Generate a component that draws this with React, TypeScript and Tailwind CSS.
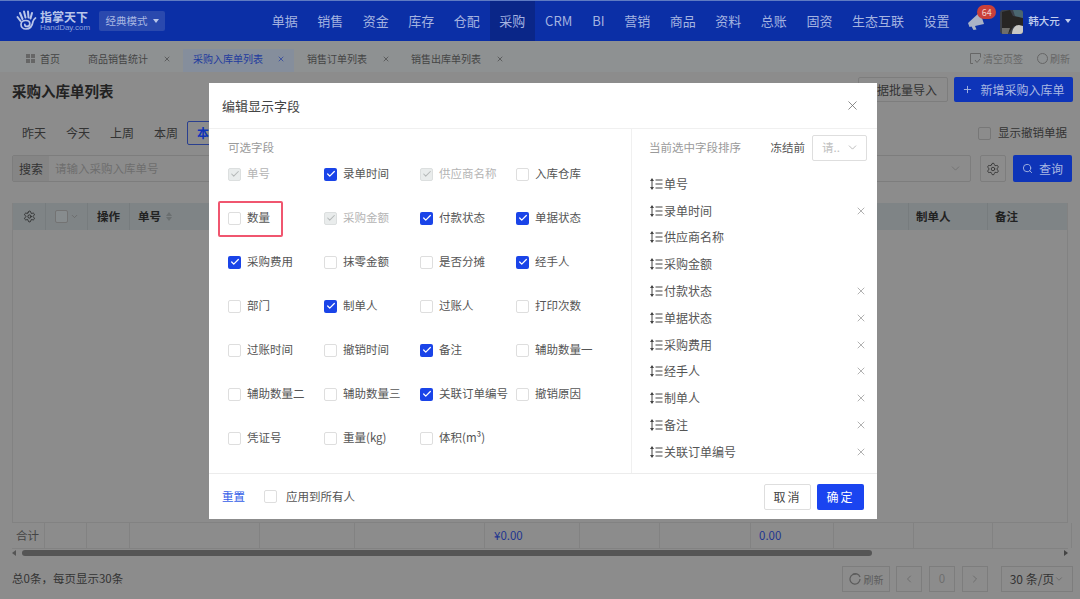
import { Check, ChevronDown, ChevronLeft, ChevronRight, Plus, Search, Settings, X } from "lucide-react"

const FONT = { fontFamily: '"Noto Sans CJK SC", "Noto Sans", sans-serif' }

const NAV = ["单据", "销售", "资金", "库存", "仓配", "采购", "CRM", "BI", "营销", "商品", "资料", "总账", "固资", "生态互联", "设置"]

// state: 0 off, 1 on, 2 locked on
const FIELDS: [string, number][] = [
  ["单号", 2], ["录单时间", 1], ["供应商名称", 2], ["入库仓库", 0],
  ["数量", 0], ["采购金额", 2], ["付款状态", 1], ["单据状态", 1],
  ["采购费用", 1], ["抹零金额", 0], ["是否分摊", 0], ["经手人", 1],
  ["部门", 0], ["制单人", 1], ["过账人", 0], ["打印次数", 0],
  ["过账时间", 0], ["撤销时间", 0], ["备注", 1], ["辅助数量一", 0],
  ["辅助数量二", 0], ["辅助数量三", 0], ["关联订单编号", 1], ["撤销原因", 0],
  ["凭证号", 0], ["重量(kg)", 0], ["体积(m³)", 0],
]

const SELECTED: [string, boolean][] = [
  ["单号", false], ["录单时间", true], ["供应商名称", false], ["采购金额", false],
  ["付款状态", true], ["单据状态", true], ["采购费用", true], ["经手人", true],
  ["制单人", true], ["备注", true], ["关联订单编号", true],
]

const TOTAL_COLS = ["w-[33px]", "w-[42px]", "w-[43px]", "w-[130px]", "w-[95px]", "w-[130px]", "w-[95px]", "w-[80px]", "w-[91px]", "w-[83px]", "w-[80px]", "w-[79px]", "w-[79px]"]

function Box({ state }: { state: number }) {
  if (state === 1) {
    return (
      <span className="flex h-[13px] w-[13px] shrink-0 items-center justify-center rounded-[2px] bg-[#1a44e8]">
        <Check className="h-[10px] w-[10px] text-white" strokeWidth={3} />
      </span>
    )
  }
  if (state === 2) {
    return (
      <span className="flex h-[13px] w-[13px] shrink-0 items-center justify-center rounded-[2px] border border-[#dcdfdf] bg-[#e9ecec]">
        <Check className="h-[10px] w-[10px] text-[#b4b8b8]" strokeWidth={2.5} />
      </span>
    )
  }
  return <span className="block h-[13px] w-[13px] shrink-0 rounded-[2px] border border-[#dedede] bg-white" />
}

function SortIcon() {
  return (
    <svg width="14" height="14" viewBox="0 0 14 14" className="shrink-0 text-[#444]">
      <path d="M3 2v10" stroke="currentColor" strokeWidth="1" />
      <path d="M1 4l2-3 2 3zM1 10l2 3 2-3z" fill="currentColor" />
      <path d="M6.5 3h7M6.5 7h7M6.5 11h7" stroke="currentColor" strokeWidth="1" />
    </svg>
  )
}

function Logo() {
  return (
    <div className="flex w-[83px] items-center">
      <svg width="21" height="22" viewBox="0 0 21 22" className="shrink-0 text-[#b9c6ea]" fill="none" stroke="currentColor" strokeLinecap="round">
        <path d="M4 3l2.5 6M8 1.5l1.5 6M12 1.5l.5 6M16 3l-1.5 5.5M1.5 7l3 4" strokeWidth="2" />
        <path d="M19.5 8c-1.5 1-2 2-2.5 3.5-.6 4-3 7.5-7 7.5-3 0-5-2-5-4.5S7 10.5 9.8 10.5s4 1.7 4 3.3-1.3 2.6-2.8 2.6-2.2-1-2.2-2" strokeWidth="1.7" />
      </svg>
      <div className="ml-[3px] flex flex-col">
        <span className="text-[12px] font-bold leading-[13px] text-[#b9c6ea]">指掌天下</span>
        <span className="text-[8px] leading-[10px] text-[#8ea2dd]" style={{ fontFamily: '"Liberation Sans", sans-serif' }}>HandDay.com</span>
      </div>
    </div>
  )
}

function Header() {
  return (
    <header className="flex h-[41px] items-center border-t border-[#5f7bc2] bg-[#0b2fa6] pl-4">
      <Logo />
      <div className="flex h-[20px] w-[66px] items-center justify-center gap-[5px] rounded-[2px] bg-[#2a49ae] text-[10.5px] text-[#a9b8e2]">
        经典模式
        <span className="h-0 w-0 border-x-[3.5px] border-t-[4px] border-x-transparent border-t-[#b9c6ea]" />
      </div>
      <nav className="ml-[97px] flex h-full">
        {NAV.map((item) => (
          <div
            key={item}
            className={`flex h-full shrink-0 items-center whitespace-nowrap text-[13px] text-[#a4b3e0] ${item === "CRM" || item === "BI" ? "px-[10px]" : "px-[9.75px]"} ${item === "采购" ? "bg-[#0a2688]" : ""}`}
          >
            {item}
          </div>
        ))}
      </nav>
      <div className="relative ml-[9px] h-[22px] w-[22px] shrink-0">
        <svg width="22" height="22" viewBox="0 0 22 22">
          <path d="M0 13 L12 2 L16 14 L7 16 L8.5 19.5 L5.5 20 L3.5 16.5 L1.5 17 Z" fill="#aab3c6" />
        </svg>
        <span className="absolute -top-[5px] left-[9px] flex h-[14px] w-[19px] items-center justify-center rounded-full bg-[#c9403a] text-[9px] leading-none text-[#f0d0cc]">64</span>
      </div>
      <svg width="23" height="24" viewBox="0 0 23 24" className="ml-[10px] mt-[1px] shrink-0 rounded-[3px]">
        <rect width="23" height="24" fill="#3a3f4a" />
        <path d="M2 2l8-2 3 6 10 2v8H14L8 24H2z" fill="#272523" />
        <path d="M13 0h10v8l-8-2z" fill="#4a6670" />
        <path d="M12 24c0-5 3-9 7-9l4 1v8z" fill="#c9c8c4" />
        <path d="M2 18h8l-2 6H2z" fill="#6f6e6a" />
      </svg>
      <span className="ml-[5px] shrink-0 whitespace-nowrap text-[10.5px] font-medium text-[#c3cfee]">韩大元</span>
      <span className="ml-[5px] h-0 w-0 shrink-0 border-x-[3px] border-t-[4px] border-x-transparent border-t-[#c3cfee]" />
    </header>
  )
}

function Tabs() {
  const tabs = [
    { label: "商品销售统计", box: "ml-[28px] w-[95px]", close: "ml-[15px]" },
    { label: "采购入库单列表", box: "w-[111px] bg-[#858e9c] pl-[10px] text-[#1e3a9e]", close: "ml-[14px]" },
    { label: "销售订单列表", box: "ml-[13px] w-[91px]", close: "ml-[15px]" },
    { label: "销售出库单列表", box: "ml-[13px] w-[91px]", close: "ml-[15px]" },
  ]
  return (
    <div className="flex h-[31px] items-end bg-[#8e9192] text-[10px] text-[#444]">
      <div className="flex h-[23px] items-center pb-[4px] pl-[26px]">
        <svg width="9" height="9" viewBox="0 0 9 9" className="fill-[#666]">
          <path d="M0 0h4v4H0zM5 0h4v4H5zM0 5h4v4H0zM5 5h4v4H5z" />
        </svg>
        <span className="ml-[5px]">首页</span>
      </div>
      {tabs.map((tab) => (
        <div key={tab.label} className={`flex h-[23px] shrink-0 items-center whitespace-nowrap pb-[4px] ${tab.box}`}>
          {tab.label}
          <X className={`mt-[1px] h-[8px] w-[8px] shrink-0 ${tab.close}`} strokeWidth={2} />
        </div>
      ))}
      <div className="ml-auto flex h-[23px] items-center pb-[4px] pr-[10px] text-[#666]">
        <svg width="11" height="11" viewBox="0 0 11 11" fill="none" stroke="#666" className="mr-[2px]">
          <path d="M3 10.5H.5V.5h10v4M5 7l2 2.5 3-3.5" />
        </svg>
        清空页签
        <span className="ml-[14px] mr-[2px] h-[11px] w-[11px] rounded-full border border-[#666]" />
        刷新
      </div>
    </div>
  )
}

function Toolbar() {
  return (
    <div className="bg-[#8c8c8c]">
      <div className="flex h-[35px] items-center pl-3 pr-[7px]">
        <h1 className="mt-[3px] text-[14.5px] font-bold text-[#222]">采购入库单列表</h1>
        <div className="ml-auto flex h-[25px] w-[90px] items-center justify-end rounded-[2px] border border-[#7d7d7d] pr-[10px] text-[12px] text-[#333]">单据批量导入</div>
        <div className="ml-[6px] flex h-[25px] w-[119px] items-center justify-center gap-[7px] rounded-[2px] bg-[#0e34b8] text-[12px] text-[#a9b8e2]">
          <Plus className="h-[11px] w-[11px]" />
          新增采购入库单
        </div>
      </div>
      <div className="mt-[14px] flex h-[24px] items-center pl-[22px] pr-[13px] text-[12px] text-[#333]">
        <span>昨天</span>
        <span className="ml-[20px]">今天</span>
        <span className="ml-[20px]">上周</span>
        <span className="ml-[20px]">本周</span>
        <span className="ml-[9px] flex h-[24px] w-[44px] items-center justify-center rounded-[2px] border border-[#2a3f8f] font-bold text-[#0e34b8]">本月</span>
        <span className="ml-auto h-[13px] w-[13px] rounded-[2px] border border-[#777]" />
        <span className="ml-[7px] text-[11.5px]">显示撤销单据</span>
      </div>
      <div className="mt-[10px] flex h-[27px] items-stretch pl-3 pr-2">
        <div className="flex flex-1 items-center rounded-[2px] border border-[#7d7d7d]">
          <span className="flex h-full w-[36px] items-center justify-center bg-[#858585] text-[12px] text-[#333]">搜索</span>
          <span className="ml-[6px] text-[11.5px] text-[#6e6e6e]">请输入采购入库单号</span>
          <ChevronDown className="ml-auto mr-[8px] h-[13px] w-[13px] text-[#6e6e6e]" strokeWidth={1.5} />
        </div>
        <div className="ml-[9px] flex w-[26px] items-center justify-center rounded-[2px] border border-[#7d7d7d]">
          <Settings className="h-[14px] w-[14px] text-[#333]" strokeWidth={1.5} />
        </div>
        <div className="ml-[7px] flex w-[59px] items-center justify-center gap-[6px] rounded-[2px] bg-[#0e34b8] text-[12px] text-[#a9b8e2]">
          <Search className="h-[11px] w-[11px]" />
          查询
        </div>
      </div>
    </div>
  )
}

function Table() {
  return (
    <div className="mx-3 mt-[21px] flex h-[319px] flex-col border-x border-[#828282]">
      <div className="flex h-[27px] shrink-0 bg-[#7f8486] text-[11.5px] font-bold text-[#222]">
        <div className="flex w-[33px] items-center justify-center border-r border-[#777c7e]">
          <Settings className="h-[13px] w-[13px]" strokeWidth={1.5} />
        </div>
        <div className="flex w-[42px] items-center justify-center gap-[2px] border-r border-[#777c7e]">
          <span className="h-[13px] w-[13px] rounded-[2px] border border-[#737373] bg-[#878c8e]" />
          <ChevronDown className="h-[9px] w-[9px] text-[#666]" />
        </div>
        <div className="flex w-[42px] items-center justify-center border-r border-[#777c7e]">操作</div>
        <div className="flex w-[130px] items-center gap-[5px] border-r border-[#777c7e] pl-[8px]">
          单号
          <span className="flex flex-col gap-[1px]">
            <span className="h-0 w-0 border-x-[3px] border-b-[4px] border-x-transparent border-b-[#6a6f70]" />
            <span className="h-0 w-0 border-x-[3px] border-t-[4px] border-x-transparent border-t-[#6a6f70]" />
          </span>
        </div>
        <div className="flex-1" />
        <div className="flex w-[80px] items-center border-x border-[#777c7e] pl-[7px]">制单人</div>
        <div className="flex w-[79px] items-center pl-[7px]">备注</div>
      </div>
      <div className="flex-1" />
    </div>
  )
}

function TableFoot() {
  return (
    <div className="mx-3">
      <div className="flex h-[27px] border-y border-[#828282] text-[11.5px]">
        {TOTAL_COLS.map((width, index) => (
          <div key={index} className={`flex shrink-0 items-center border-r border-[#828282] ${width}`}>
            {index === 0 && <span className="ml-[4px] text-[#444]">合计</span>}
            {index === 6 && <span className="ml-[9px] text-[#1d3590]">¥0.00</span>}
            {index === 9 && <span className="ml-[8px] text-[#1d3590]">0.00</span>}
          </div>
        ))}
      </div>
      <div className="flex h-[7px] items-center">
        <span className="h-0 w-0 border-y-[3px] border-r-[4px] border-y-transparent border-r-[#555]" />
        <span className="ml-[6px] h-[6px] w-[850px] rounded-full bg-[#555]" />
        <span className="ml-auto h-0 w-0 border-y-[3px] border-l-[4px] border-y-transparent border-l-[#444]" />
      </div>
    </div>
  )
}

function Pager() {
  const pageBox = "flex h-[26px] w-[26px] items-center justify-center border border-[#7d7d7d] text-[#6e6e6e]"
  return (
    <div className="mt-[10px] flex items-center pl-3 pr-[7px] text-[11.5px] text-[#333]">
      <span>总0条，每页显示30条</span>
      <div className="ml-auto flex h-[26px] w-[48px] items-center justify-center gap-[3px] border border-[#7d7d7d] text-[10px] text-[#5c5c5c]">
        <svg width="12" height="12" viewBox="0 0 12 12" fill="none" stroke="currentColor" strokeWidth="1.2">
          <path d="M7.5 1.3A5 5 0 1 0 11 6" />
          <path d="M3.5 1.5A5 5 0 0 1 11 4" />
        </svg>
        刷新
      </div>
      <div className={`ml-[6px] ${pageBox}`}><ChevronLeft className="h-[12px] w-[12px]" /></div>
      <div className={`ml-[7px] ${pageBox}`}>0</div>
      <div className={`ml-[7px] ${pageBox}`}><ChevronRight className="h-[12px] w-[12px]" /></div>
      <div className="ml-[13px] flex h-[26px] w-[72px] items-center justify-center border border-[#7d7d7d] text-[12px]">
        30 条/页
        <ChevronDown className="h-[10px] w-[10px] text-[#666]" />
      </div>
    </div>
  )
}

function FieldDialog() {
  return (
    <div className="absolute left-[209px] top-[83px] flex h-[436px] w-[668px] flex-col bg-white">
      <div className="flex h-[46px] shrink-0 items-center justify-between border-b border-[#f0f0f0] pl-[13px] pr-[17px]">
        <span className="text-[13px] text-[#444]">编辑显示字段</span>
        <X className="h-[15px] w-[15px] text-[#666]" strokeWidth={1.2} />
      </div>
      <div className="flex h-[345px] shrink-0 border-b border-[#ececec]">
        <div className="w-[423px] shrink-0 border-r border-[#f0f0f0] pl-[19px] pt-[13px]">
          <div className="h-[10px] text-[11.5px] leading-[10px] text-[#9a9a9a]">可选字段</div>
          <div className="grid auto-rows-[44px] grid-cols-[96px_96px_96px_96px]">
            {FIELDS.map(([name, state]) => (
              <div key={name} className="relative flex items-center gap-[6px] whitespace-nowrap text-[11.5px]">
                <Box state={state} />
                <span className={state === 2 ? "text-[#b4b4b4]" : "text-[#555]"}>{name}</span>
                {name === "数量" && (
                  <span className="absolute -left-[10px] top-[5px] h-[36px] w-[65px] rounded-[2px] border-2 border-[#f0566f]" />
                )}
              </div>
            ))}
          </div>
        </div>
        <div className="flex-1 pl-[17px] pr-[10px]">
          <div className="flex h-[36px] items-center pt-[1px]">
            <span className="text-[11.5px] text-[#9a9a9a]">当前选中字段排序</span>
            <span className="ml-auto text-[11.5px] text-[#555]">冻结前</span>
            <div className="ml-[7px] flex h-[26px] w-[55px] items-center justify-between rounded-[2px] border border-[#dedede] pl-[9px] pr-[7px] text-[11.5px] text-[#c0c0c0]">
              请..
              <ChevronDown className="h-[13px] w-[13px] text-[#999]" strokeWidth={1.2} />
            </div>
          </div>
          <div className="mt-[5.5px]">
            {SELECTED.map(([name, removable]) => (
              <div key={name} className="flex h-[26.8px] items-center gap-[1px] text-[12px] text-[#555]">
                <SortIcon />
                {name}
                {removable && <X className="ml-auto h-[12px] w-[12px] text-[#888]" strokeWidth={1.3} />}
              </div>
            ))}
          </div>
        </div>
      </div>
      <div className="flex flex-1 items-center px-[13px] text-[11.5px]">
        <span className="text-[#3560e8]">重置</span>
        <span className="ml-[19px]"><Box state={0} /></span>
        <span className="ml-[9px] text-[#555]">应用到所有人</span>
        <div className="ml-auto flex h-[26px] w-[47px] items-center justify-center rounded-[2px] border border-[#dedede] text-[12px] tracking-[2px] text-[#444]">取消</div>
        <div className="ml-[6px] flex h-[26px] w-[47px] items-center justify-center rounded-[2px] bg-[#1a44f0] text-[12px] tracking-[2px] text-white">确定</div>
      </div>
    </div>
  )
}

export default function App() {
  return (
    <div className="relative h-[599px] w-[1080px] overflow-hidden bg-[#8c8c8c]" style={FONT}>
      <Header />
      <Tabs />
      <Toolbar />
      <Table />
      <TableFoot />
      <Pager />
      <FieldDialog />
    </div>
  )
}
